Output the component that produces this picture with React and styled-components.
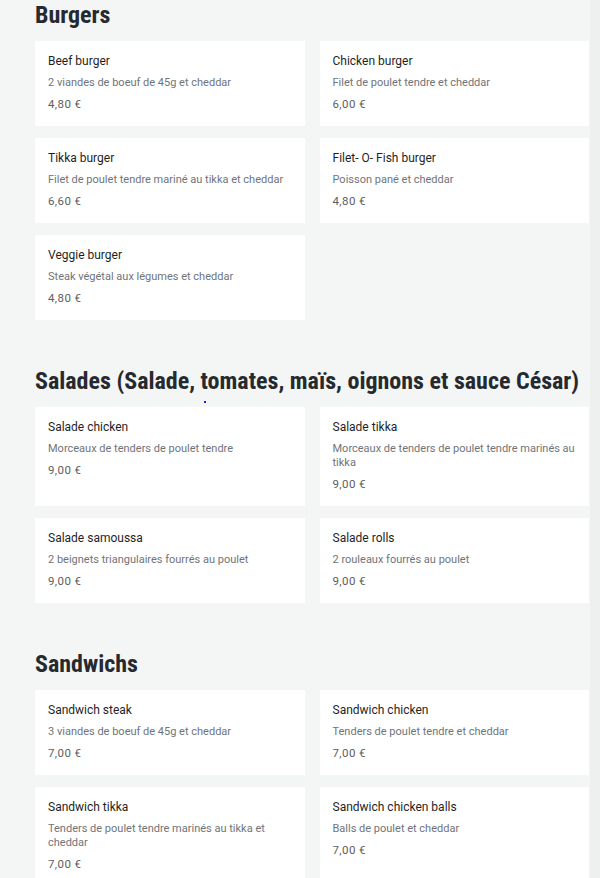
import styled, { createGlobalStyle } from "styled-components";

const GlobalStyle = createGlobalStyle`
  html, body {
    margin: 0;
    padding: 0;
    background: #f4f5f5;
  }
  body {
    font-family: Roboto, "Liberation Sans", sans-serif;
  }
`;

const menu = [
  {
    title: "Burgers",
    items: [
      { name: "Beef burger", desc: "2 viandes de boeuf de 45g et cheddar", price: "4,80 €" },
      { name: "Chicken burger", desc: "Filet de poulet tendre et cheddar", price: "6,00 €" },
      { name: "Tikka burger", desc: "Filet de poulet tendre mariné au tikka et cheddar", price: "6,60 €" },
      { name: "Filet- O- Fish burger", desc: "Poisson pané et cheddar", price: "4,80 €" },
      { name: "Veggie burger", desc: "Steak végétal aux légumes et cheddar", price: "4,80 €" },
    ],
  },
  {
    title: "Salades (Salade, tomates, maïs, oignons et sauce César)",
    dot: true,
    items: [
      { name: "Salade chicken", desc: "Morceaux de tenders de poulet tendre", price: "9,00 €" },
      { name: "Salade tikka", desc: "Morceaux de tenders de poulet tendre marinés au tikka", price: "9,00 €" },
      { name: "Salade samoussa", desc: "2 beignets triangulaires fourrés au poulet", price: "9,00 €" },
      { name: "Salade rolls", desc: "2 rouleaux fourrés au poulet", price: "9,00 €" },
    ],
  },
  {
    title: "Sandwichs",
    items: [
      { name: "Sandwich steak", desc: "3 viandes de boeuf de 45g et cheddar", price: "7,00 €" },
      { name: "Sandwich chicken", desc: "Tenders de poulet tendre et cheddar", price: "7,00 €" },
      { name: "Sandwich tikka", desc: "Tenders de poulet tendre marinés au tikka et cheddar", price: "7,00 €" },
      { name: "Sandwich chicken balls", desc: "Balls de poulet et cheddar", price: "7,00 €" },
    ],
  },
];

export default function App() {
  return (
    <>
      <GlobalStyle />
      <Page>
        <Main>
          {menu.map((section) => (
            <Section key={section.title}>
              <Heading>{section.title}</Heading>
              {section.dot && <Dot />}
              <Grid>
                {section.items.map((item) => (
                  <Card key={item.name}>
                    <ItemName>{item.name}</ItemName>
                    <ItemDesc>{item.desc}</ItemDesc>
                    <ItemPrice>{item.price}</ItemPrice>
                  </Card>
                ))}
              </Grid>
            </Section>
          ))}
        </Main>
        <Gutter />
      </Page>
    </>
  );
}

const Page = styled.div`
  display: flex;
  width: 600px;
  height: 878px;
  overflow: hidden;
`;

const Main = styled.main`
  flex: 1;
  min-width: 0;
  padding: 1px 1px 0 35px;
  display: flex;
  flex-direction: column;
  gap: 47px;
`;

const Gutter = styled.div`
  width: 10px;
  flex-shrink: 0;
  background: #eeefef;
`;

const Section = styled.section`
  position: relative;
`;

const Heading = styled.h2`
  margin: 0 0 12px;
  font-family: Roboto, "Liberation Sans", sans-serif;
  font-size: 24px;
  line-height: 28px;
  font-weight: 700;
  font-stretch: 87.5%;
  white-space: nowrap;
  color: #262a2e;
`;

const Dot = styled.span`
  position: absolute;
  left: 169px;
  top: 34px;
  width: 2px;
  height: 2px;
  background: #1a1aff;
`;

const Grid = styled.div`
  display: grid;
  grid-template-columns: minmax(0, 1fr) minmax(0, 1fr);
  column-gap: 15px;
  row-gap: 12px;
`;

const Card = styled.div`
  background: #ffffff;
  padding: 12px 13px 15px;
  display: flex;
  flex-direction: column;
  gap: 7px;
`;

const ItemName = styled.div`
  font-size: 12px;
  line-height: 16px;
  color: #1f1f1f;
`;

const ItemDesc = styled.div`
  font-size: 11px;
  line-height: 14px;
  color: #70747a;
`;

const ItemPrice = styled.div`
  font-size: 11.5px;
  line-height: 14px;
  letter-spacing: 0.4px;
  color: #5e5e5e;
`;
